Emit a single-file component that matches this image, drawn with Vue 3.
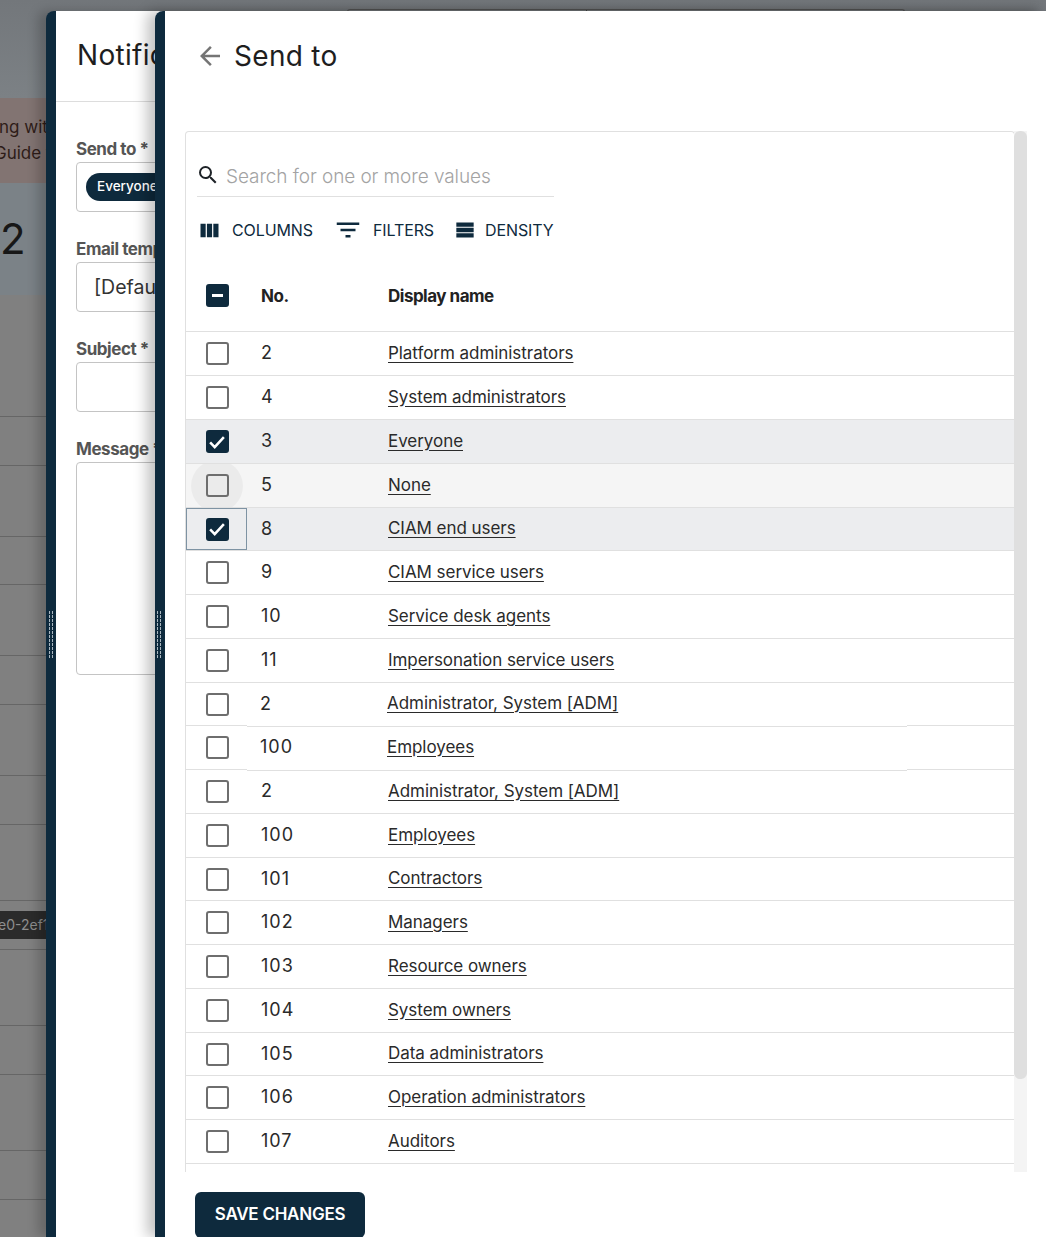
<template>
  <div class="page">
    <!-- dimmed page behind the drawers -->
    <div class="backdrop">
      <div class="bg-top"></div>
      <div class="bg-alert">
        <div class="alert-one">ng with</div>
        <div class="alert-two">Guide for</div>
      </div>
      <div class="bg-stat">2</div>
      <div class="bg-rows">
        <div v-for="(h, i) in bgRows" :key="i" class="bg-row" :style="{ height: h + 'px' }"></div>
      </div>
      <div class="bg-tabs"><span></span></div>
      <div class="bg-chip">e0-2ef1</div>
    </div>

    <aside class="drawer drawer-back">
      <div class="grip"></div>
      <div class="drawer-body">
        <h2 class="notif-title">Notifications</h2>
        <div class="notif-form">
          <label>Send to *</label>
          <div class="field field-send"><span class="chip">Everyone</span></div>
          <label>Email template *</label>
          <div class="field field-template">[Default]</div>
          <label>Subject *</label>
          <div class="field field-subject"></div>
          <label>Message *</label>
          <div class="field field-message"></div>
        </div>
      </div>
    </aside>

    <aside class="drawer drawer-front">
      <div class="grip"></div>
      <div class="drawer-body">
        <header class="send-head">
          <svg class="back-icon" viewBox="0 0 24 24" width="30" height="30">
            <path d="M20 11H7.83l5.59-5.59L12 4l-8 8 8 8 1.41-1.41L7.83 13H20v-2z" />
          </svg>
          <h2>Send to</h2>
        </header>

        <div class="grid-wrap">
          <div class="grid-box">
            <div class="search">
              <svg viewBox="0 0 24 24" width="24" height="24">
                <path d="M15.5 14h-.79l-.28-.27A6.47 6.47 0 0 0 16 9.5 6.5 6.5 0 1 0 9.5 16c1.61 0 3.09-.59 4.23-1.57l.27.28v.79l5 4.99L20.49 19l-4.99-5zm-6 0C7.01 14 5 11.99 5 9.5S7.01 5 9.5 5 14 7.01 14 9.500 11.99 14 9.5 14z" />
              </svg>
              <span>Search for one or more values</span>
            </div>
            <div class="toolbar">
              <span class="tool tool-columns">
                <svg viewBox="0 0 24 24" width="27" height="27"><path d="M4 6h4.600v12H4zM9.700 6h4.600v12H9.700zM15.400 6H20v12h-4.600z" /></svg>
                COLUMNS
              </span>
              <span class="tool tool-filters">
                <svg viewBox="0 0 24 24" width="30" height="30"><path d="M10 18h4v-2h-4v2zM3 6v2h18V6H3zm3 7h12v-2H6v2z" /></svg>
                FILTERS
              </span>
              <span class="tool tool-density">
                <svg viewBox="0 0 24 24" width="26" height="26"><path d="M4 5h16v4H4zM4 10h16v4H4zM4 15h16v4H4z" /></svg>
                DENSITY
              </span>
            </div>
            <div class="grid-head">
              <span class="cell-check"><span class="box box-on"><i class="dash"></i></span></span>
              <span class="cell-no">No.</span>
              <span class="cell-name">Display name</span>
            </div>
            <div
              v-for="(row, i) in rows"
              :key="i"
              class="grid-row"
              :class="{ selected: row.on, hovered: row.hover, nudged: row.nudged }"
              :style="{ height: row.h + 'px' }"
            >
              <span class="cell-check" :class="{ focused: row.focus }">
                <span v-if="row.hover" class="ripple"></span>
                <span class="box" :class="{ 'box-on': row.on }">
                  <svg v-if="row.on" viewBox="0 0 24 24" width="22" height="22"><path d="M4.500 12.500 9.500 17.500 19.500 6.800" /></svg>
                </span>
              </span>
              <span class="cell-no">{{ row.no }}</span>
              <span class="cell-name"><a>{{ row.name }}</a></span>
            </div>
          </div>
          <div class="scrollbar"><div class="scroll-thumb"></div></div>
        </div>

        <div class="actions">
          <button class="save">SAVE CHANGES</button>
        </div>
      </div>
    </aside>
  </div>
</template>

<script setup>
const bgRows = [49, 49, 71, 48, 71, 49, 71, 49, 76, 49, 76, 49, 76, 49, 38]

const names = [
  [2, "Platform administrators"],
  [4, "System administrators"],
  [3, "Everyone", { on: true }],
  [5, "None", { hover: true }],
  [8, "CIAM end users", { on: true, focus: true }],
  [9, "CIAM service users"],
  [10, "Service desk agents"],
  [11, "Impersonation service users"],
  [2, "Administrator, System [ADM]", { nudged: true }],
  [100, "Employees", { nudged: true }],
  [2, "Administrator, System [ADM]"],
  [100, "Employees"],
  [101, "Contractors"],
  [102, "Managers"],
  [103, "Resource owners"],
  [104, "System owners"],
  [105, "Data administrators"],
  [106, "Operation administrators"],
  [107, "Auditors"]
]

// row heights alternate a little because the source table has fractional heights
const heights = [44, 44, 44, 44, 43, 44, 44, 44, 43, 44, 44, 44, 43, 44, 44, 44, 43, 44, 44]

const rows = names.map(([no, name, extra], i) => ({ no, name, h: heights[i], ...extra }))
</script>

<style>
html,
body {
  margin: 0;
  background: #808080;
}
</style>

<style scoped>
.page {
  position: relative;
  width: 1046px;
  height: 1237px;
  overflow: hidden;
  font-family: Inter, "Liberation Sans", sans-serif;
  color: #1e1e1e;
}

.backdrop {
  position: absolute;
  inset: 0;
  background: #808080;
  display: flex;
  flex-direction: column;
}

.bg-top {
  height: 98px;
  background: linear-gradient(#73777b, #7c8185);
  flex-shrink: 0;
}

.bg-alert {
  height: 85px;
  background: #827472;
  color: #2e1c18;
  font-size: 17px;
  line-height: 26px;
  padding-top: 16px;
  box-sizing: border-box;
  white-space: nowrap;
  flex-shrink: 0;
}

.alert-one {
  margin-left: -1px;
}

.alert-two {
  margin-left: -6px;
}

.bg-stat {
  height: 112px;
  background: #7b8287;
  color: #171717;
  font-size: 42px;
  line-height: 112px;
  flex-shrink: 0;
}

.bg-rows {
  padding-top: 73px;
}

.bg-row {
  border-bottom: 1px solid #666;
  box-sizing: border-box;
}

.bg-tabs {
  position: absolute;
  left: 347px;
  top: 9px;
  width: 558px;
  height: 6px;
  box-sizing: border-box;
  border: 1px solid #555;
  border-bottom: 0;
  border-radius: 3px 3px 0 0;
}

.bg-tabs span {
  position: absolute;
  left: 238px;
  top: 0;
  width: 1px;
  height: 6px;
  background: #444;
}

.bg-chip {
  position: absolute;
  left: 0;
  top: 911px;
  width: 46px;
  height: 28px;
  background: #2b2b2b;
  color: #8e8e8e;
  font-size: 14px;
  line-height: 28px;
  overflow: hidden;
  white-space: nowrap;
  text-indent: -2px;
}

.drawer {
  position: absolute;
  top: 11px;
  bottom: 0;
  display: flex;
  border-radius: 8px 0 0 0;
  overflow: hidden;
}

.drawer-back {
  left: 46px;
  right: 0;
  box-shadow: -8px 0 12px rgba(0, 0, 0, 0.2);
}

.drawer-front {
  left: 155px;
  right: 0;
  box-shadow: -8px 0 14px rgba(0, 0, 0, 0.24);
}

.grip {
  width: 10px;
  flex-shrink: 0;
  background-color: #0e2a3d;
  position: relative;
}

.grip::after {
  content: "";
  position: absolute;
  left: 3px;
  top: 600px;
  width: 5px;
  height: 48px;
  background-image:
    repeating-linear-gradient(#a9b6bf 0 3px, transparent 3px 4px),
    repeating-linear-gradient(#a9b6bf 0 3px, transparent 3px 4px);
  background-size: 1px 100%, 1px 100%;
  background-position: 0 0, 3px 0;
  background-repeat: no-repeat;
}

.drawer-front .grip::after {
  left: 2px;
}

.drawer-body {
  flex: 1;
  background: #fff;
  min-width: 0;
}

.notif-title {
  margin: 0;
  height: 91px;
  padding: 26px 0 0 21px;
  box-sizing: border-box;
  border-bottom: 1px solid #ddd;
  font-size: 28px;
  line-height: 36px;
  font-weight: 400;
  letter-spacing: 0.3px;
  white-space: nowrap;
}

.notif-form {
  padding: 37px 0 0 20px;
  width: 400px;
  display: flex;
  flex-direction: column;
}

.notif-form label {
  font-size: 17px;
  line-height: 20px;
  font-weight: 700;
  color: #555;
  letter-spacing: -0.45px;
  white-space: nowrap;
}

.field {
  border: 1px solid #c4c4c4;
  border-radius: 4px;
  height: 50px;
  box-sizing: border-box;
  margin: 3px 0 27px;
  display: flex;
  align-items: center;
  padding-left: 9px;
  white-space: nowrap;
}

.field-template {
  font-size: 19.500px;
  padding-left: 17px;
  color: #333;
}

.field-message {
  height: 213px;
}

.chip {
  background: #0e2a3d;
  color: #fff;
  font-size: 13.500px;
  font-weight: 500;
  height: 28px;
  line-height: 27px;
  padding: 0 12px 0 11px;
  border-radius: 14px;
  margin-top: -1px;
}

.send-head {
  height: 120px;
  box-sizing: border-box;
  padding: 30px 0 0 30px;
  display: flex;
  align-items: flex-start;
  gap: 9px;
}

.send-head h2 {
  margin: 0;
  font-size: 28px;
  line-height: 30px;
  font-weight: 400;
  letter-spacing: 0.3px;
  color: #1e1e1e;
}

.back-icon {
  fill: #757575;
}

.grid-wrap {
  position: relative;
  margin-left: 20px;
  width: 842px;
  height: 1041px;
  overflow: hidden;
}

.grid-box {
  width: 830px;
  box-sizing: border-box;
  border: 1px solid #e0e0e0;
  border-bottom: 0;
  border-radius: 4px 4px 0 0;
  height: 100%;
}

.search {
  margin: 22px 0 0 11px;
  width: 357px;
  height: 43px;
  border-bottom: 1px solid #e0e0e0;
  box-sizing: border-box;
  display: flex;
  align-items: center;
  gap: 6px;
  font-size: 19px;
  font-weight: 300;
  letter-spacing: -0.08px;
  color: #a3a3a3;
}

.search span {
  padding-top: 2px;
}

.search svg {
  fill: #1e2328;
  margin-left: -1px;
}

.toolbar {
  height: 68px;
  padding-bottom: 2px;
  box-sizing: border-box;
  display: flex;
  align-items: center;
  color: #0e2a3d;
  font-size: 16px;
  letter-spacing: -0.1px;
}

.tool {
  display: inline-flex;
  align-items: center;
  white-space: nowrap;
}

.tool svg {
  fill: #0e2a3d;
  flex-shrink: 0;
}

.tool-columns {
  margin-left: 10px;
  gap: 9px;
}

.tool-filters {
  margin-left: 20px;
  gap: 10px;
}

.tool-density {
  margin-left: 18px;
  gap: 7px;
}

.grid-head,
.grid-row {
  display: flex;
  align-items: center;
  border-bottom: 1px solid #e0e0e0;
  box-sizing: border-box;
  position: relative;
}

.grid-head {
  height: 67px;
  padding-bottom: 5px;
  font-size: 17px;
  font-weight: 700;
  letter-spacing: -0.5px;
  color: #222;
}

.cell-check {
  width: 61px;
  height: 100%;
  padding-left: 1px;
  flex-shrink: 0;
  display: flex;
  align-items: center;
  justify-content: center;
  position: relative;
  box-sizing: border-box;
}

.cell-check.focused {
  outline: 1px solid #7e93a3;
  outline-offset: -1px;
}

.cell-no {
  width: 141px;
  padding-left: 14px;
  box-sizing: border-box;
  flex-shrink: 0;
}

.grid-row {
  font-size: 17px;
  color: #2a2a2a;
  letter-spacing: -0.05px;
}

.grid-row .cell-no {
  font-size: 18px;
  letter-spacing: 1px;
  padding-bottom: 2px;
}

.grid-row .cell-name {
  padding-bottom: 2px;
}

.grid-row a {
  text-decoration: underline;
  text-underline-offset: 3px;
}

.grid-row.selected {
  background: #ecedef;
}

.grid-row.hovered {
  background: #f5f5f5;
  overflow: hidden;
}

.grid-row.nudged .cell-no,
.grid-row.nudged .cell-name {
  transform: translateX(-1px);
}

/* the two shifted rows have their inner line one pixel lower */
.grid-row.nudged::after {
  content: "";
  position: absolute;
  left: 61px;
  width: 660px;
  bottom: -2px;
  height: 2px;
  background: linear-gradient(#fff 50%, #e0e0e0 50%);
}

.box {
  width: 23px;
  height: 23px;
  box-sizing: border-box;
  border: 2.500px solid #6e6e6e;
  border-radius: 3px;
  display: flex;
  align-items: center;
  justify-content: center;
  position: relative;
  background: transparent;
}

.box-on {
  background: #0e2a3d;
  border-color: #0e2a3d;
}

.box-on svg {
  fill: none;
  stroke: #fff;
  stroke-width: 2.800;
  flex-shrink: 0;
}

.dash {
  width: 11px;
  height: 3px;
  background: #fff;
  display: block;
}

.ripple {
  position: absolute;
  left: 5px;
  top: 50%;
  width: 52px;
  height: 52px;
  margin-top: -26px;
  border-radius: 50%;
  background: rgba(0, 0, 0, 0.04);
}

.scrollbar {
  position: absolute;
  right: 0;
  top: 0;
  width: 13px;
  height: 100%;
  background: #f4f4f4;
}

.scroll-thumb {
  height: 948px;
  background: #dfdfdf;
  border-radius: 6px;
}

.actions {
  padding: 20px 0 0 30px;
}

.save {
  width: 170px;
  height: 46px;
  border: 0;
  border-radius: 6px;
  background: #0e2a3d;
  color: #fff;
  font-family: inherit;
  font-size: 17px;
  font-weight: 600;
  letter-spacing: -0.25px;
  padding: 0 0 2px;
}
</style>
